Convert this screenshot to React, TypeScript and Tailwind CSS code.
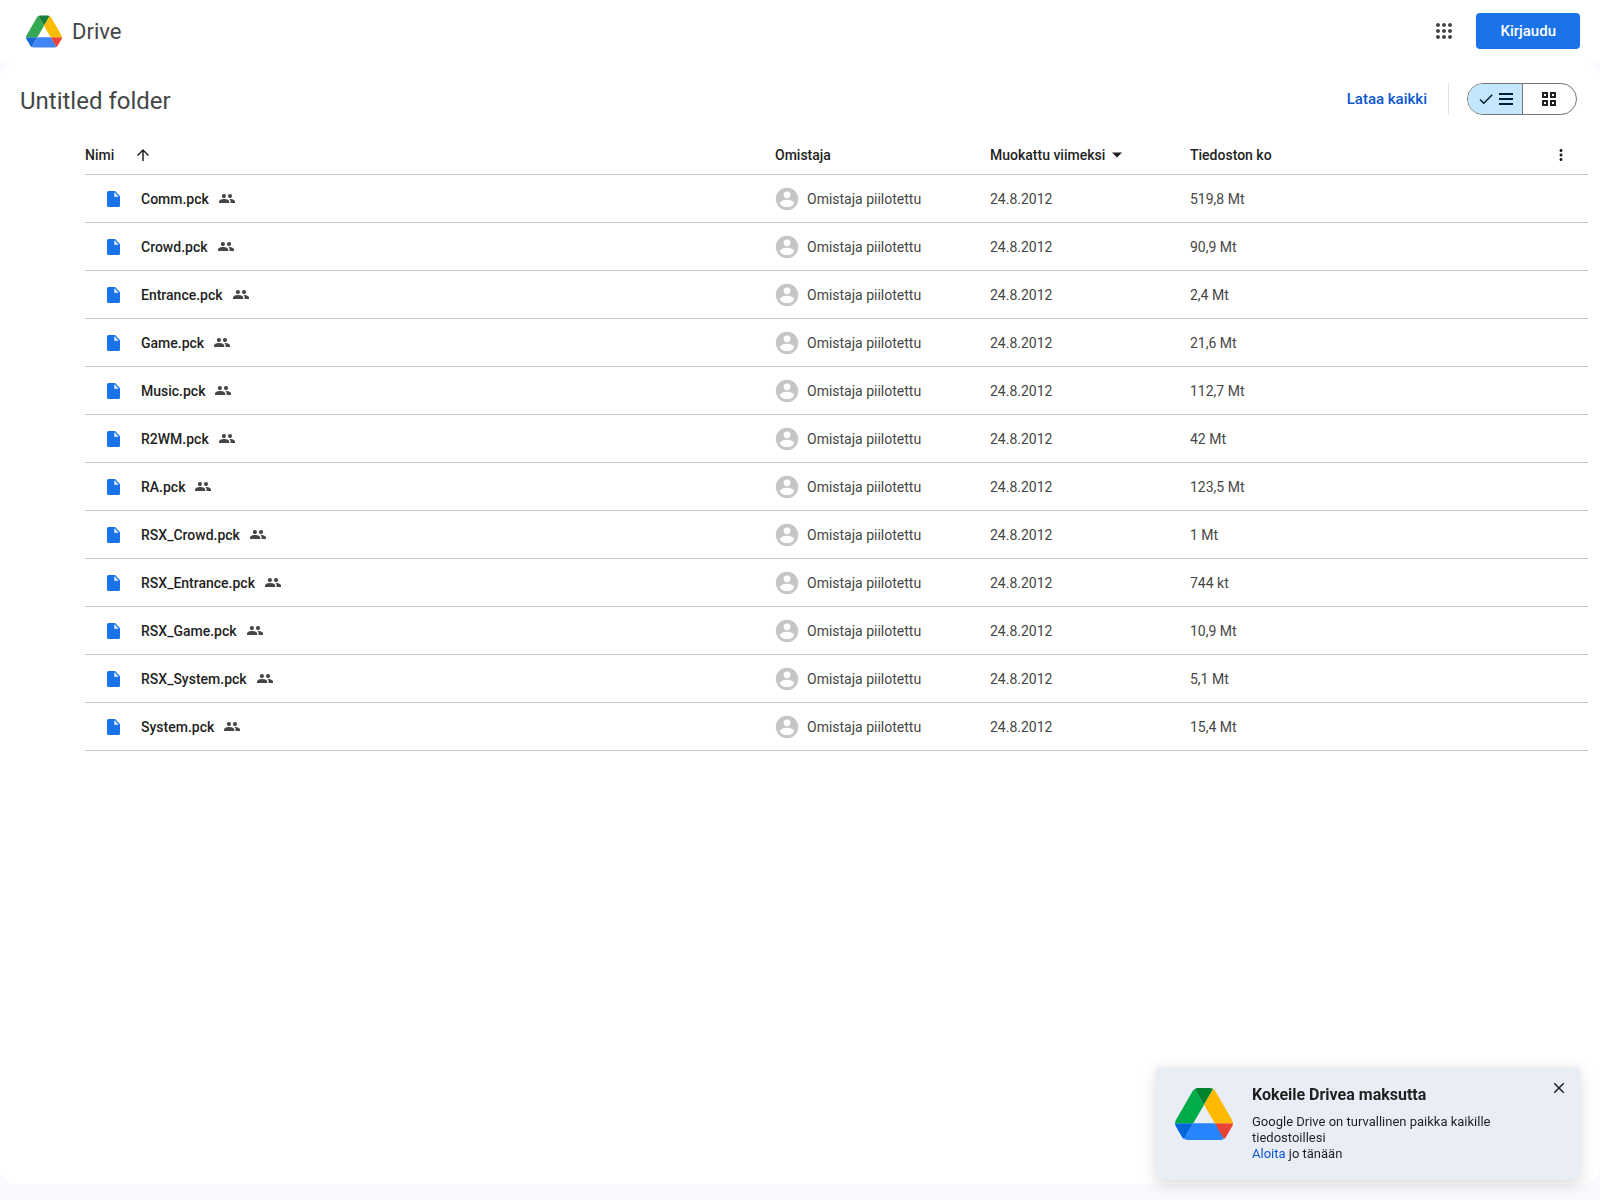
import { useState } from "react";

const files = [
  { name: "Comm.pck", size: "519,8 Mt" },
  { name: "Crowd.pck", size: "90,9 Mt" },
  { name: "Entrance.pck", size: "2,4 Mt" },
  { name: "Game.pck", size: "21,6 Mt" },
  { name: "Music.pck", size: "112,7 Mt" },
  { name: "R2WM.pck", size: "42 Mt" },
  { name: "RA.pck", size: "123,5 Mt" },
  { name: "RSX_Crowd.pck", size: "1 Mt" },
  { name: "RSX_Entrance.pck", size: "744 kt" },
  { name: "RSX_Game.pck", size: "10,9 Mt" },
  { name: "RSX_System.pck", size: "5,1 Mt" },
  { name: "System.pck", size: "15,4 Mt" },
];

type LogoColors = {
  green: string;
  darkGreen: string;
  yellow: string;
  blue: string;
  darkBlue: string;
  red: string;
};

const headerColors: LogoColors = {
  green: "#34a853",
  darkGreen: "#188038",
  yellow: "#fbbc04",
  blue: "#4285f4",
  darkBlue: "#1967d2",
  red: "#ea4335",
};

const promoColors: LogoColors = {
  green: "#00ac47",
  darkGreen: "#00832d",
  yellow: "#ffba00",
  blue: "#2684fc",
  darkBlue: "#0066da",
  red: "#ea4335",
};

function DriveLogo({ className, colors }: { className: string; colors: LogoColors }) {
  return (
    <svg viewBox="0 0 87.3 78" className={className} aria-hidden="true">
      <path fill={colors.darkBlue} d="m6.6 66.85 3.85 6.65c.8 1.4 1.95 2.5 3.3 3.3l13.75-23.8h-27.5c0 1.55.4 3.1 1.2 4.5z" />
      <path fill={colors.green} d="m43.65 25-13.75-23.8c-1.35.8-2.5 1.9-3.3 3.3l-25.4 44a9.06 9.06 0 0 0 -1.2 4.5h27.5z" />
      <path fill={colors.red} d="m73.55 76.8c1.35-.8 2.5-1.9 3.3-3.3l1.6-2.75 7.65-13.25c.8-1.4 1.2-2.95 1.2-4.5h-27.502l5.852 11.5z" />
      <path fill={colors.darkGreen} d="m43.65 25 13.75-23.8c-1.35-.8-2.9-1.2-4.5-1.2h-18.5c-1.6 0-3.15.45-4.5 1.2z" />
      <path fill={colors.blue} d="m59.8 53h-32.3l-13.75 23.8c1.35.8 2.9 1.2 4.5 1.2h50.8c1.6 0 3.15-.45 4.5-1.2z" />
      <path fill={colors.yellow} d="m73.4 26.5-12.7-22c-.8-1.4-1.95-2.5-3.3-3.3l-13.75 23.8 16.15 28h27.45c0-1.55-.4-3.1-1.2-4.5z" />
    </svg>
  );
}

function Icon({ d, className }: { d: string; className: string }) {
  return (
    <svg viewBox="0 0 24 24" fill="currentColor" className={className} aria-hidden="true">
      <path d={d} />
    </svg>
  );
}

const icons = {
  apps: "M6 8c1.1 0 2-.9 2-2s-.9-2-2-2-2 .9-2 2 .9 2 2 2zm6 12c1.1 0 2-.9 2-2s-.9-2-2-2-2 .9-2 2 .9 2 2 2zm-6 0c1.1 0 2-.9 2-2s-.9-2-2-2-2 .9-2 2 .9 2 2 2zm0-6c1.1 0 2-.9 2-2s-.9-2-2-2-2 .9-2 2 .9 2 2 2zm6 0c1.1 0 2-.9 2-2s-.9-2-2-2-2 .9-2 2 .9 2 2 2zm4-8c0 1.1.9 2 2 2s2-.9 2-2-.9-2-2-2-2 .9-2 2zm-4 2c1.1 0 2-.9 2-2s-.9-2-2-2-2 .9-2 2 .9 2 2 2zm6 6c1.1 0 2-.9 2-2s-.9-2-2-2-2 .9-2 2 .9 2 2 2zm0 6c1.1 0 2-.9 2-2s-.9-2-2-2-2 .9-2 2 .9 2 2 2z",
  check: "M9 16.17 4.83 12l-1.42 1.41L9 19 21 7l-1.41-1.41z",
  arrowUp: "M4 12l1.41 1.41L11 7.83V20h2V7.83l5.58 5.59L20 12l-8-8-8 8z",
  caret: "M6 9l6 6 6-6z",
  more: "M12 8c1.1 0 2-.9 2-2s-.9-2-2-2-2 .9-2 2 .9 2 2 2zm0 2c-1.1 0-2 .9-2 2s.9 2 2 2 2-.9 2-2-.9-2-2-2zm0 6c-1.1 0-2 .9-2 2s.9 2 2 2 2-.9 2-2-.9-2-2-2z",
  close: "M19 6.41 17.59 5 12 10.59 6.41 5 5 6.41 10.59 12 5 17.59 6.41 19 12 13.41 17.59 19 19 17.59 13.41 12z",
};

function FileIcon() {
  return (
    <svg viewBox="0 0 13 16" className="h-4 w-[13px]" aria-hidden="true">
      <path fill="#1a73e8" d="M1.5 0H8l5 5v9.5a1.5 1.5 0 0 1-1.5 1.5h-10A1.5 1.5 0 0 1 0 14.5v-13A1.5 1.5 0 0 1 1.5 0zM7.3 1.3v4.4h4.4z" />
    </svg>
  );
}

function SharedIcon() {
  return (
    <svg viewBox="0 0 16 9" fill="#444746" className="h-[9px] w-4" aria-label="Jaettu" role="img">
      <circle cx="4.9" cy="2.1" r="2.1" />
      <circle cx="11" cy="2.1" r="2.1" />
      <path d="M0 9V7.5C0 5.8 3.2 5 5.1 5s5.100.8 5.100 2.500V9z" />
      <path d="M11.600 9V7.500c0-1-.5-1.800-1.200-2.400C12.600 4.900 16 5.800 16 7.500V9z" />
    </svg>
  );
}

function Avatar() {
  return (
    <svg viewBox="-1 -1 24 24" className="size-6 shrink-0" aria-hidden="true">
      <circle cx="11" cy="11" r="11.2" fill="#c4c7c5" />
      <circle cx="11" cy="6.8" r="3.4" fill="#fff" />
      <path fill="#fff" d="M11 11.7c2.900 0 7.200 1.300 7.200 3.700-1.500 2.200-4.100 3.700-7.200 3.700s-5.700-1.500-7.200-3.700c0-2.400 4.300-3.700 7.200-3.700z" />
    </svg>
  );
}

function Header() {
  return (
    <header className="flex h-[63px] items-center justify-between bg-white pr-5 pb-px pl-[26px]">
      <a href="#" className="flex items-center gap-2.5 text-[22px] text-[#444746]">
        <DriveLogo className="h-[33px] w-9" colors={headerColors} />
        Drive
      </a>
      <div className="flex items-center gap-5">
        <button type="button" aria-label="Google-sovellukset" className="text-[#444746]">
          <Icon d={icons.apps} className="size-6" />
        </button>
        <a href="#" className="flex h-9 items-center rounded bg-[#1a73e8] px-6 text-[15px] font-medium text-white">
          Kirjaudu
        </a>
      </div>
    </header>
  );
}

function Toolbar() {
  const [layout, setLayout] = useState("list");

  return (
    <div className="flex h-[72px] items-center justify-between pr-[23px] pl-5">
      <h1 className="pt-1 text-2xl text-[#444746]">Untitled folder</h1>
      <div className="flex items-center">
        <button type="button" className="text-[15px] font-medium text-[#0b57d0]">
          Lataa kaikki
        </button>
        <div className="mr-[18px] ml-[21px] h-8 w-px bg-[#dde3ea]"></div>
        <div className="flex h-8 w-[110px] overflow-hidden rounded-full border border-[#747775]">
          <button
            type="button"
            aria-label="Luettelonäkymä"
            aria-pressed={layout === "list"}
            onClick={() => setLayout("list")}
            className="flex flex-1 items-center justify-center gap-1 border-r border-[#747775] bg-[#c2e7ff] text-[#001d35]"
          >
            <Icon d={icons.check} className="size-[18px]" />
            <svg viewBox="0 0 14 12" fill="currentColor" className="h-3 w-3.5" aria-hidden="true">
              <path d="M0 0h14v2H0zM0 5h14v2H0zM0 10h14v2H0z" />
            </svg>
          </button>
          <button
            type="button"
            aria-label="Ruudukkonäkymä"
            aria-pressed={layout === "grid"}
            onClick={() => setLayout("grid")}
            className="flex flex-1 items-center justify-center text-[#1f1f1f]"
          >
            <svg viewBox="0 0 14 14" fill="none" stroke="currentColor" strokeWidth="2" className="size-3.5" aria-hidden="true">
              <path d="M1 1h4v4H1zM9 1h4v4H9zM1 9h4v4H1zM9 9h4v4H9z" />
            </svg>
          </button>
        </div>
      </div>
    </div>
  );
}

function FileTable() {
  return (
    <div className="pr-3 pl-[85px]">
      <table className="w-full table-fixed border-separate border-spacing-0 text-left text-sm">
        <thead>
          <tr className="h-10 text-[#1f1f1f] *:border-b *:border-[#c4c7c5] *:p-0 *:font-medium">
            <th>
              <button type="button" className="flex items-center gap-5">
                Nimi
                <Icon d={icons.arrowUp} className="size-[18px]" />
              </button>
            </th>
            <th className="w-[215px]">Omistaja</th>
            <th className="w-[200px]">
              <button type="button" className="flex items-center gap-0.5">
                Muokattu viimeksi
                <Icon d={icons.caret} className="size-5" />
              </button>
            </th>
            <th className="w-[82px]">
              <div className="overflow-hidden whitespace-nowrap">Tiedoston koko</div>
            </th>
            <th className="w-[316px]">
              <button type="button" aria-label="Lisää toimintoja" className="mr-[18px] ml-auto block">
                <Icon d={icons.more} className="size-[18px]" />
              </button>
            </th>
          </tr>
        </thead>
        <tbody>
          {files.map((file) => (
            <tr key={file.name} className="h-12 text-[#444746] *:border-b *:border-[#c4c7c5] *:p-0">
              <td>
                <div className="flex items-center pl-[22px]">
                  <FileIcon />
                  <span className="mr-2.5 ml-[21px] font-medium text-[#1f1f1f]">{file.name}</span>
                  <SharedIcon />
                </div>
              </td>
              <td>
                <div className="flex items-center gap-2">
                  <Avatar />
                  Omistaja piilotettu
                </div>
              </td>
              <td>24.8.2012</td>
              <td>{file.size}</td>
              <td></td>
            </tr>
          ))}
        </tbody>
      </table>
    </div>
  );
}

function Promo() {
  const [open, setOpen] = useState(true);
  if (!open) return null;

  return (
    <aside className="fixed right-5 bottom-5 flex w-[424px] rounded-sm bg-[#e9edf6] pt-3 pr-3 pb-[18px] pl-[19px] text-[13px] leading-4 text-[#1f1f1f] shadow-[0_4px_16px_rgba(0,0,0,0.15)]">
      <DriveLogo className="mt-[9px] h-[52px] w-[58px] shrink-0" colors={promoColors} />
      <div className="mt-2 ml-[19px] flex-1">
        <h2 className="mb-[11px] text-base leading-4 font-bold">Kokeile Drivea maksutta</h2>
        <p>Google Drive on turvallinen paikka kaikille tiedostoillesi</p>
        <p>
          <a href="#" className="text-[#0b57d0]">Aloita</a> jo tänään
        </p>
      </div>
      <button type="button" aria-label="Sulje" onClick={() => setOpen(false)} className="self-start">
        <Icon d={icons.close} className="size-[18px]" />
      </button>
    </aside>
  );
}

export default function App() {
  return (
    <div className="flex min-h-screen flex-col bg-[#f8fafd] pb-4 font-[Roboto,sans-serif]">
      <Header />
      <main className="flex-1 rounded-2xl bg-white">
        <Toolbar />
        <FileTable />
      </main>
      <Promo />
    </div>
  );
}
